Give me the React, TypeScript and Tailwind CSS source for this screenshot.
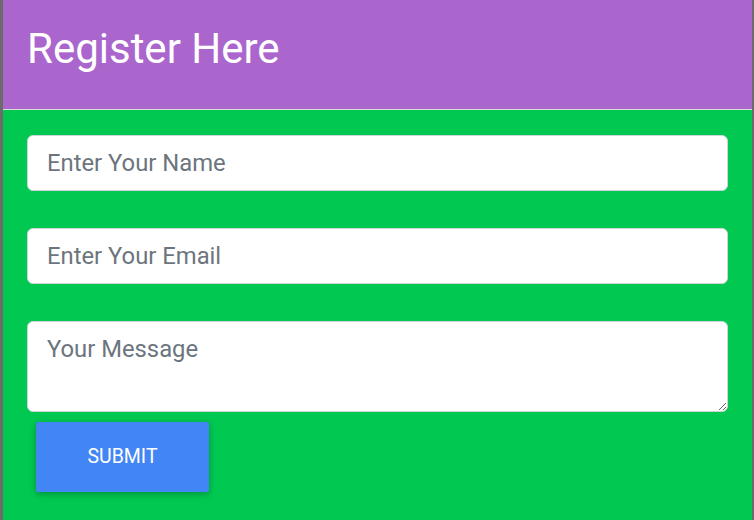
export default function App() {
  return (
    <div
      className="h-[520px] w-[754px] bg-[#6b6b6b] pl-[3px] pr-[2px] overflow-hidden"
      style={{ fontFamily: "Roboto, 'Liberation Sans', sans-serif" }}
    >
      <div className="flex h-full flex-col">
        {/* Header */}
        <div className="h-[110px] shrink-0 border-b border-[#dcdcdc] bg-[#aa66cc] pl-[24px] pt-[22px]">
          <h1 className="text-[42px] leading-[54px] font-normal text-white">Register Here</h1>
        </div>

        {/* Form */}
        <form className="flex flex-1 flex-col bg-[#00c851] pl-[24px] pr-[24px] pt-[25px]">
          <input
            type="text"
            placeholder="Enter Your Name"
            className="h-[56px] w-full rounded-[6px] border border-[#ced4da] bg-white px-[19px] text-[23.8px] text-[#495057] placeholder:text-[#6c757d] outline-none"
          />
          <input
            type="email"
            placeholder="Enter Your Email"
            className="mt-[37px] h-[56px] w-full rounded-[6px] border border-[#ced4da] bg-white px-[19px] text-[23.8px] text-[#495057] placeholder:text-[#6c757d] outline-none"
          />
          <textarea
            placeholder="Your Message"
            className="mt-[37px] h-[91px] w-full rounded-[6px] border border-[#ced4da] bg-white px-[19px] pt-[11px] text-[23.8px] leading-[32px] text-[#495057] placeholder:text-[#6c757d] outline-none"
          />
          <div>
            <button
              type="button"
              className="mt-[10px] ml-[9px] h-[70px] w-[173px] rounded-[2px] bg-[#4285f4] text-[19.5px] text-white uppercase shadow-[0_2px_5px_0_rgba(0,0,0,0.16),0_2px_10px_0_rgba(0,0,0,0.12)]"
            >
              Submit
            </button>
          </div>
        </form>
      </div>
    </div>
  );
}
